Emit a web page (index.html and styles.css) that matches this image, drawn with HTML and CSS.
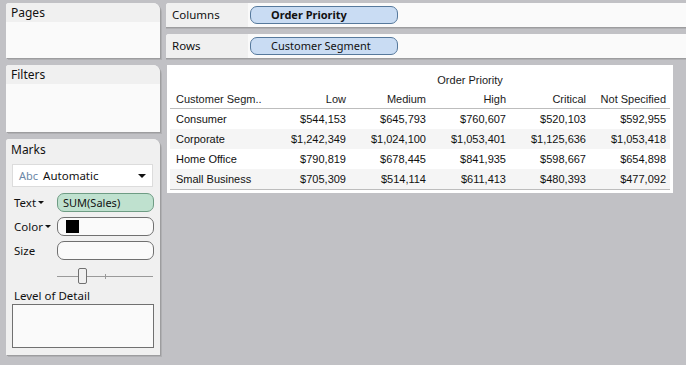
FILE: index.html
```html
<!DOCTYPE html>
<html lang="en">

<head>
    <meta charset="UTF-8">
    <title>Order Priority by Customer Segment</title>
    <link rel="stylesheet" href="styles.css">
</head>

<body>
    <div class="workspace">
        <div class="sidebar">
            <div class="panel pages">
                <div class="panel-title">Pages</div>
                <div class="panel-body"></div>
            </div>
            <div class="panel filters">
                <div class="panel-title">Filters</div>
                <div class="panel-body"></div>
            </div>
            <div class="panel marks">
                <div class="panel-title">Marks</div>
                <div class="mark-type">
                    <span class="abc">Abc</span>
                    <span class="mark-name">Automatic</span>
                    <span class="caret"></span>
                </div>
                <div class="mark-row first">
                    <span class="mark-label">Text<span class="mini-caret"></span></span>
                    <span class="pill-slot green">SUM(Sales)</span>
                </div>
                <div class="mark-row">
                    <span class="mark-label">Color<span class="mini-caret"></span></span>
                    <span class="pill-slot"><span class="swatch"></span></span>
                </div>
                <div class="mark-row">
                    <span class="mark-label">Size</span>
                    <span class="pill-slot"></span>
                </div>
                <div class="slider">
                    <span class="track"></span>
                    <span class="tick"></span>
                    <span class="thumb"></span>
                </div>
                <div class="detail-label">Level of Detail</div>
                <div class="detail-box"></div>
            </div>
        </div>

        <div class="main">
            <div class="shelf">
                <div class="shelf-label">Columns</div>
                <div class="shelf-body">
                    <span class="pill bold">Order Priority</span>
                </div>
            </div>
            <div class="shelf">
                <div class="shelf-label">Rows</div>
                <div class="shelf-body">
                    <span class="pill">Customer Segment</span>
                </div>
            </div>

            <div class="view">
                <table class="crosstab">
                    <colgroup>
                        <col class="c-first">
                        <col class="c-num">
                        <col class="c-num">
                        <col class="c-num">
                        <col class="c-num">
                        <col class="c-num">
                    </colgroup>
                    <thead>
                        <tr class="top-head">
                            <th></th>
                            <th colspan="5">Order Priority</th>
                        </tr>
                        <tr class="col-head">
                            <th class="left">Customer Segm..</th>
                            <th>Low</th>
                            <th>Medium</th>
                            <th>High</th>
                            <th>Critical</th>
                            <th>Not Specified</th>
                        </tr>
                    </thead>
                    <tbody>
                        <tr>
                            <td class="left">Consumer</td>
                            <td>$544,153</td>
                            <td>$645,793</td>
                            <td>$760,607</td>
                            <td>$520,103</td>
                            <td>$592,955</td>
                        </tr>
                        <tr class="stripe">
                            <td class="left">Corporate</td>
                            <td>$1,242,349</td>
                            <td>$1,024,100</td>
                            <td>$1,053,401</td>
                            <td>$1,125,636</td>
                            <td>$1,053,418</td>
                        </tr>
                        <tr>
                            <td class="left">Home Office</td>
                            <td>$790,819</td>
                            <td>$678,445</td>
                            <td>$841,935</td>
                            <td>$598,667</td>
                            <td>$654,898</td>
                        </tr>
                        <tr class="stripe">
                            <td class="left">Small Business</td>
                            <td>$705,309</td>
                            <td>$514,114</td>
                            <td>$611,413</td>
                            <td>$480,393</td>
                            <td>$477,092</td>
                        </tr>
                    </tbody>
                </table>
            </div>
        </div>
    </div>
</body>

</html>
```

FILE: styles.css
```css
body {
    margin: 0;
    background-color: #c1c1c5;
    font-family: "Noto Sans", "Open Sans", sans-serif;
    font-size: 11.5px;
    color: #111;
}

.workspace {
    display: flex;
    gap: 6px;
    padding: 3px 0 0 6px;
    height: 362px;
}

.sidebar {
    width: 154px;
    display: flex;
    flex-direction: column;
    gap: 7px;
}

.panel {
    background-color: #fafafa;
    border-radius: 3px 7px 0 0;
    box-shadow: 1px 1px 0 #9d9d9f, 2px 2px 0 #b0b0b3;
    display: flex;
    flex-direction: column;
}

.panel-title {
    background-color: #f0f0f0;
    height: 19px;
    line-height: 20px;
    padding-left: 5px;
    font-size: 12px;
    border-radius: 3px 7px 0 0;
}

.panel-body {
    flex: 1;
}

.pages {
    height: 55px;
}

.filters {
    height: 67px;
}

.marks {
    height: 216px;
    background-color: #f0f0f0;
}

.marks .panel-title {
    height: 21px;
    line-height: 21px;
}

.mark-type {
    margin: 4px 7px 0 6px;
    height: 21px;
    border: 1px solid #dcdcdc;
    background-color: #fff;
    display: flex;
    align-items: center;
    padding-left: 6px;
    font-size: 11.5px;
}

.abc {
    color: #6b87a6;
    font-size: 11px;
    margin-right: 5px;
}

.mark-name {
    flex: 1;
}

.caret {
    width: 0;
    height: 0;
    border-left: 4px solid transparent;
    border-right: 4px solid transparent;
    border-top: 4px solid #111;
    margin-right: 6px;
}

.mark-row {
    display: flex;
    align-items: center;
    margin: 5px 0 0 8px;
    height: 19px;
}

.mark-row.first {
    margin-top: 6px;
}

.mark-label {
    width: 43px;
    display: flex;
    align-items: center;
}

.mini-caret {
    width: 0;
    height: 0;
    border-left: 3px solid transparent;
    border-right: 3px solid transparent;
    border-top: 3px solid #111;
    margin-left: 2px;
}

.pill-slot {
    box-sizing: border-box;
    width: 97px;
    height: 19px;
    border: 1px solid #707070;
    border-radius: 7px;
    background-color: #fafafa;
    display: flex;
    align-items: center;
    padding-left: 8px;
}

.pill-slot.green {
    background-color: #bfe1cf;
    border-color: #6e9c84;
    padding-left: 5px;
    font-size: 11px;
}

.swatch {
    width: 13px;
    height: 13px;
    background-color: #000;
}

.slider {
    position: relative;
    height: 16px;
    margin: 8px 0 0 51px;
    width: 96px;
}

.track {
    position: absolute;
    left: 0;
    right: 0;
    top: 8px;
    height: 1px;
    background-color: #9a9a9a;
}

.tick {
    position: absolute;
    left: 48px;
    top: 6px;
    width: 1px;
    height: 5px;
    background-color: #9a9a9a;
}

.thumb {
    position: absolute;
    left: 21px;
    top: 0;
    width: 7px;
    height: 14px;
    border: 1px solid #707070;
    border-radius: 2px;
    background-color: #f0f0f0;
}

.detail-label {
    margin: 2px 0 0 8px;
    height: 18px;
    line-height: 19px;
}

.detail-box {
    margin: 0 0 0 6px;
    width: 140px;
    height: 42px;
    border: 1px solid #707070;
    background-color: #fafafa;
}

.main {
    flex: 1;
    display: flex;
    flex-direction: column;
    gap: 7px;
    align-items: flex-start;
}

.shelf {
    align-self: stretch;
    display: flex;
    height: 24px;
    background-color: #fafafa;
    border-radius: 3px 0 0 0;
    box-shadow: 0 1px 0 #9d9d9f, 0 2px 0 #b0b0b3;
}

.shelf-label {
    width: 76px;
    background-color: #f0f0f0;
    padding-left: 6px;
    line-height: 24px;
    border-radius: 3px 0 0 0;
}

.shelf-body {
    flex: 1;
    display: flex;
    align-items: center;
    padding-left: 2px;
}

.pill {
    box-sizing: border-box;
    width: 148px;
    height: 18px;
    border: 1px solid #56799c;
    border-radius: 7px;
    background-color: #c9dcf3;
    padding-left: 20px;
    line-height: 16px;
    font-size: 11px;
}

.pill.bold {
    font-weight: bold;
}

.view {
    background-color: #fff;
    margin-left: 1px;
    padding: 5px 3px 3px 3px;
}

.crosstab {
    border-collapse: collapse;
    table-layout: fixed;
    width: 500px;
    font-family: "Liberation Sans", Arial, sans-serif;
    font-size: 11px;
    color: #111;
}

.c-first {
    width: 100px;
}

.c-num {
    width: 80px;
}

.crosstab th {
    font-weight: normal;
    text-align: right;
    padding: 0 4px 0 0;
    color: #1a1a1a;
}

.crosstab .top-head th {
    height: 19px;
    text-align: center;
    padding: 0;
}

.crosstab .col-head th {
    height: 19px;
    border-bottom: 1px solid #bdbdbd;
}

.crosstab td {
    height: 20px;
    padding: 0 4px 0 0;
    text-align: right;
}

.crosstab .left {
    text-align: left;
    padding-left: 6px;
}

.crosstab tbody tr:last-child td {
    border-bottom: 1px solid #bdbdbd;
}

.stripe td {
    background-color: #f5f5f5;
}
```
